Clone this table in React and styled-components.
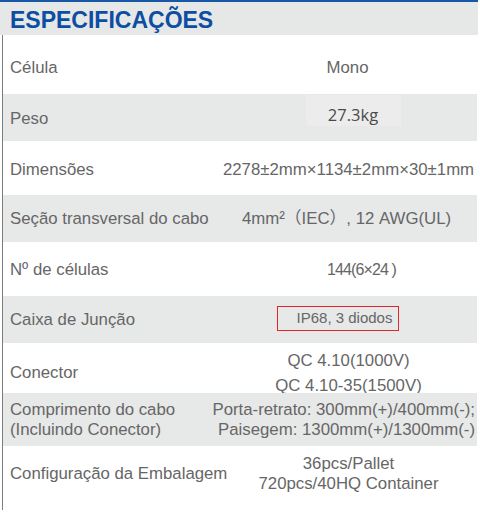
import React from "react";
import styled, { createGlobalStyle } from "styled-components";

const Global = createGlobalStyle`
  html, body { margin: 0; padding: 0; background: #ffffff; }
  body { font-family: "Liberation Sans", Arial, sans-serif; }
`;

const Page = styled.div`
  width: 480px;
  height: 512px;
  overflow: hidden;
  background: #ffffff;
`;

const Header = styled.div`
  width: 478px;
  height: 35px;
  border-top: 2px solid #1757a6;
  background: #e6e7e7;
  display: flex;
  align-items: center;
  padding-left: 10px;
  box-sizing: border-box;
`;

const Title = styled.h1`
  margin: 0;
  font-family: "Liberation Sans", Arial, sans-serif;
  font-weight: 700;
  font-size: 23px;
  color: #0b4ea2;
  line-height: 1;
  padding-top: 4px;
`;

const Table = styled.div`
  margin-left: 2px;
  width: 474px;
  border-left: 1px solid #7c7c7c;
  display: flex;
  flex-direction: column;
`;

const Row = styled.div`
  display: grid;
  grid-template-columns: 217px minmax(0, 1fr);
  height: ${(p) => p.$h}px;
  background: ${(p) => (p.$shade ? "#e7e8e8" : "#ffffff")};
  color: #666666;
  font-size: 16.8px;
`;

const Label = styled.div`
  padding-left: 7px;
  display: flex;
  flex-direction: column;
  justify-content: ${(p) => (p.$top ? "flex-start" : "center")};
  line-height: 20px;
  padding-top: ${(p) => p.$pt || 0}px;
  white-space: nowrap;
`;

const Value = styled.div`
  display: flex;
  flex-direction: column;
  justify-content: ${(p) => (p.$top ? "flex-start" : "center")};
  align-items: ${(p) => (p.$right ? "flex-end" : "center")};
  text-align: ${(p) => (p.$right ? "right" : "center")};
  line-height: 20px;
  gap: ${(p) => p.$gap || 0}px;
  white-space: nowrap;
  padding-right: ${(p) => p.$pr || 0}px;
  padding-left: ${(p) => p.$pl || 0}px;
  padding-top: ${(p) => p.$pt || 0}px;
  font-family: "Liberation Sans", Arial, "Noto Sans CJK SC", sans-serif;
`;

const Narrow = styled.span`
  font-size: 16px;
  letter-spacing: -0.9px;
`;

const WeightBox = styled.span`
  display: block;
  box-sizing: border-box;
  width: 95px;
  height: 31px;
  padding-top: 10px;
  line-height: 20px;
  background: #ececec;
  text-align: center;
  font-family: "Open Sans", "Noto Sans", sans-serif;
  font-size: 16.5px;
  color: #4a4a4a;
  margin-bottom: 14px;
`;

const Highlight = styled.span`
  display: block;
  box-sizing: border-box;
  border: 1.5px solid #e0262b;
  padding: 0 6px 0 19px;
  height: 25px;
  line-height: 22px;
  font-size: 15px;
  margin-right: 21px;
  margin-bottom: 10px;
`;

export default function App() {
  return (
    <Page>
      <Global />
      <Header>
        <Title>ESPECIFICAÇÕES</Title>
      </Header>
      <Table>
        <Row $h={59}>
          <Label $pt={6}>Célula</Label>
          <Value $pt={6} $pr={2}>Mono</Value>
        </Row>
        <Row $h={47} $shade>
          <Label $pt={2}>Peso</Label>
          <Value $pl={9}>
            <WeightBox>27.3kg</WeightBox>
          </Value>
        </Row>
        <Row $h={54}>
          <Label $pt={3}>Dimensões</Label>
          <Value $pt={3}>2278±2mm×1134±2mm×30±1mm</Value>
        </Row>
        <Row $h={47} $shade>
          <Label $pt={1}>Seção transversal do cabo</Label>
          <Value $pr={4} $pt={1}>4mm²（IEC）, 12 AWG(UL)</Value>
        </Row>
        <Row $h={54}>
          <Label $pt={2}>Nº de células</Label>
          <Value $pt={2} $pl={26}>
            <Narrow>144(6×24 )</Narrow>
          </Value>
        </Row>
        <Row $h={47} $shade>
          <Label $pt={1}>Caixa de Junção</Label>
          <Value $pt={7}>
            <Highlight>IP68, 3 diodos</Highlight>
          </Value>
        </Row>
        <Row $h={50}>
          <Label $pt={6}>Conector</Label>
          <Value $top $gap={5} $pt={8}>
            <span>QC 4.10(1000V)</span>
            <span>QC 4.10-35(1500V)</span>
          </Value>
        </Row>
        <Row $h={53} $shade>
          <Label>
            <span>Comprimento do cabo</span>
            <span>(Incluindo Conector)</span>
          </Label>
          <Value $right $pr={2}>
            <span>Porta-retrato: 300mm(+)/400mm(-);</span>
            <span>Paisegem: 1300mm(+)/1300mm(-)</span>
          </Value>
        </Row>
        <Row $h={64}>
          <Label $top $pt={18}>Configuração da Embalagem</Label>
          <Value $top $pt={8}>
            <span>36pcs/Pallet</span>
            <span>720pcs/40HQ Container</span>
          </Value>
        </Row>
      </Table>
    </Page>
  );
}
